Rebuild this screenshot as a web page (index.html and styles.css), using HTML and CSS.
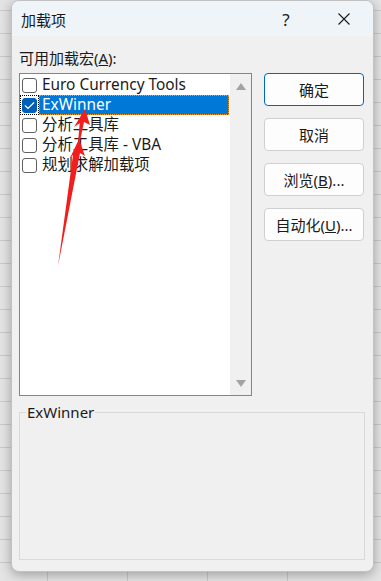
FILE: index.html
```html
<!DOCTYPE html>
<html lang="zh-CN">
<head>
    <meta charset="UTF-8">
    <title>加载项</title>
    <link rel="stylesheet" href="styles.css">
</head>
<body>
    <div class="dialog">
        <div class="titlebar">
            <span class="title">加载项</span>
            <span class="caption-btn help">?</span>
            <span class="caption-btn">
                <svg width="12" height="12" viewBox="0 0 12 12"><path d="M0.5 0.5 L11.5 11.5 M11.5 0.5 L0.5 11.5" stroke="#1a1a1a" stroke-width="1.1" fill="none"/></svg>
            </span>
        </div>
        <div class="content">
            <div class="label">可用加载宏(<u>A</u>):</div>
            <div class="main">
                <div class="listbox">
                    <div class="items">
                        <div class="item">
                            <span class="box"><span class="check"></span></span>
                            <span class="name">Euro Currency Tools</span>
                        </div>
                        <div class="item selected">
                            <span class="box"><span class="check checked">
                                <svg width="11" height="9" viewBox="0 0 11 9"><path d="M1 4.5 L4 7.5 L10 1.5" stroke="#fff" stroke-width="1.2" fill="none"/></svg>
                            </span></span>
                            <span class="name">ExWinner</span>
                        </div>
                        <div class="item">
                            <span class="box"><span class="check"></span></span>
                            <span class="name">分析工具库</span>
                        </div>
                        <div class="item">
                            <span class="box"><span class="check"></span></span>
                            <span class="name">分析工具库 - VBA</span>
                        </div>
                        <div class="item">
                            <span class="box"><span class="check"></span></span>
                            <span class="name">规划求解加载项</span>
                        </div>
                    </div>
                    <div class="scrollbar">
                        <svg width="10" height="7" viewBox="0 0 10 7"><path d="M5 0 L10 7 L0 7 Z" fill="#a3a3a3"/></svg>
                        <svg width="10" height="7" viewBox="0 0 10 7"><path d="M0 0 L10 0 L5 7 Z" fill="#a3a3a3"/></svg>
                    </div>
                </div>
                <div class="buttons">
                    <button class="btn default">确定</button>
                    <button class="btn">取消</button>
                    <button class="btn">浏览(<u>B</u>)...</button>
                    <button class="btn">自动化(<u>U</u>)...</button>
                </div>
            </div>
            <fieldset class="desc">
                <legend>ExWinner</legend>
            </fieldset>
        </div>
    </div>

    <!-- red annotation arrows -->
    <svg class="arrows" width="381" height="581" viewBox="0 0 381 581">
        <polygon points="85,109 90,125 84,122 80,141 78,141 80,123 74,127" fill="#f21d1d"/>
        <polygon points="79,139 85,156 80,153 58,266 73,155 70,158" fill="#f21d1d"/>
    </svg>
</body>
</html>
```

FILE: styles.css
```css
body {
    margin: 0;
    width: 381px;
    height: 581px;
    overflow: hidden;
    position: relative;
    font-family: "Noto Sans", "Noto Sans CJK SC", sans-serif;
    font-size: 15px;
    color: #1a1a1a;
    background-color: #e4e4e4;
    background-image:
        repeating-linear-gradient(to bottom, transparent 0 22px, #cacaca 22px 23px),
        repeating-linear-gradient(to right, transparent 0 79px, #cacaca 79px 80px);
    background-position: 0 -12px, -32px 0;
}

.dialog {
    margin-left: 11px;
    width: 363px;
    height: 572px;
    box-sizing: border-box;
    border: 1px solid #c2c2c2;
    border-radius: 8px;
    background-color: #f0f0f0;
    overflow: hidden;
    box-shadow: 0 3px 12px rgba(0,0,0,0.3);
}

.titlebar {
    height: 35px;
    display: flex;
    align-items: center;
    padding-left: 9px;
    padding-top: 1px;
    box-sizing: border-box;
    background-color: #eef4f8;
}

.title {
    flex: 1;
}

.caption-btn {
    width: 58px;
    display: flex;
    justify-content: center;
    align-items: center;
}

.help {
    font-size: 17px;
}

.content {
    padding: 12px 9px 0 7px;
}

.label {
    line-height: 20px;
}

.main {
    display: flex;
    gap: 12px;
    margin-top: 5px;
}

.listbox {
    width: 233px;
    height: 323px;
    box-sizing: border-box;
    border: 1px solid #82868c;
    background-color: white;
    display: flex;
}

.items {
    flex: 1;
    padding-top: 1px;
    font-size: 15.4px;
}

.item {
    display: flex;
    height: 20px;
    line-height: 20px;
    white-space: nowrap;
}

.box {
    width: 19px;
    height: 20px;
    box-sizing: border-box;
    display: flex;
    align-items: center;
    justify-content: center;
}

.check {
    width: 15px;
    height: 15px;
    box-sizing: border-box;
    border: 1px solid #616161;
    border-radius: 3px;
    background-color: white;
    display: flex;
    align-items: center;
    justify-content: center;
}

.check.checked {
    background-color: #005fb8;
    border-color: #005fb8;
}

.name {
    padding-left: 3px;
}

.selected .box {
    border: 1px dotted #000;
}

.selected .name {
    flex: 1;
    margin-right: 1px;
    padding-left: 2px;
    line-height: 18px;
    background-color: #0078d7;
    color: white;
    border: 1px dotted #f59a2c;
}

.scrollbar {
    width: 21px;
    background-color: #f0f0f0;
    display: flex;
    flex-direction: column;
    justify-content: space-between;
    align-items: center;
    padding: 9px 0 8px;
}

.buttons {
    display: flex;
    flex-direction: column;
    gap: 12px;
}

.btn {
    width: 100px;
    height: 33px;
    font-family: inherit;
    font-size: 15px;
    color: #1a1a1a;
    background-color: #fdfdfd;
    border: 1px solid #d0d0d0;
    border-radius: 4px;
    padding: 0;
}

.btn.default {
    border-color: #0067c0;
}

.desc {
    margin: 6px 0 0 0;
    width: 346px;
    height: 158px;
    box-sizing: border-box;
    border: 1px solid #d9d9d9;
    padding: 0 6px;
}

.desc legend {
    padding: 0 1px;
    line-height: 20px;
}

.arrows {
    position: absolute;
    left: 0;
    top: 0;
    pointer-events: none;
}
```
